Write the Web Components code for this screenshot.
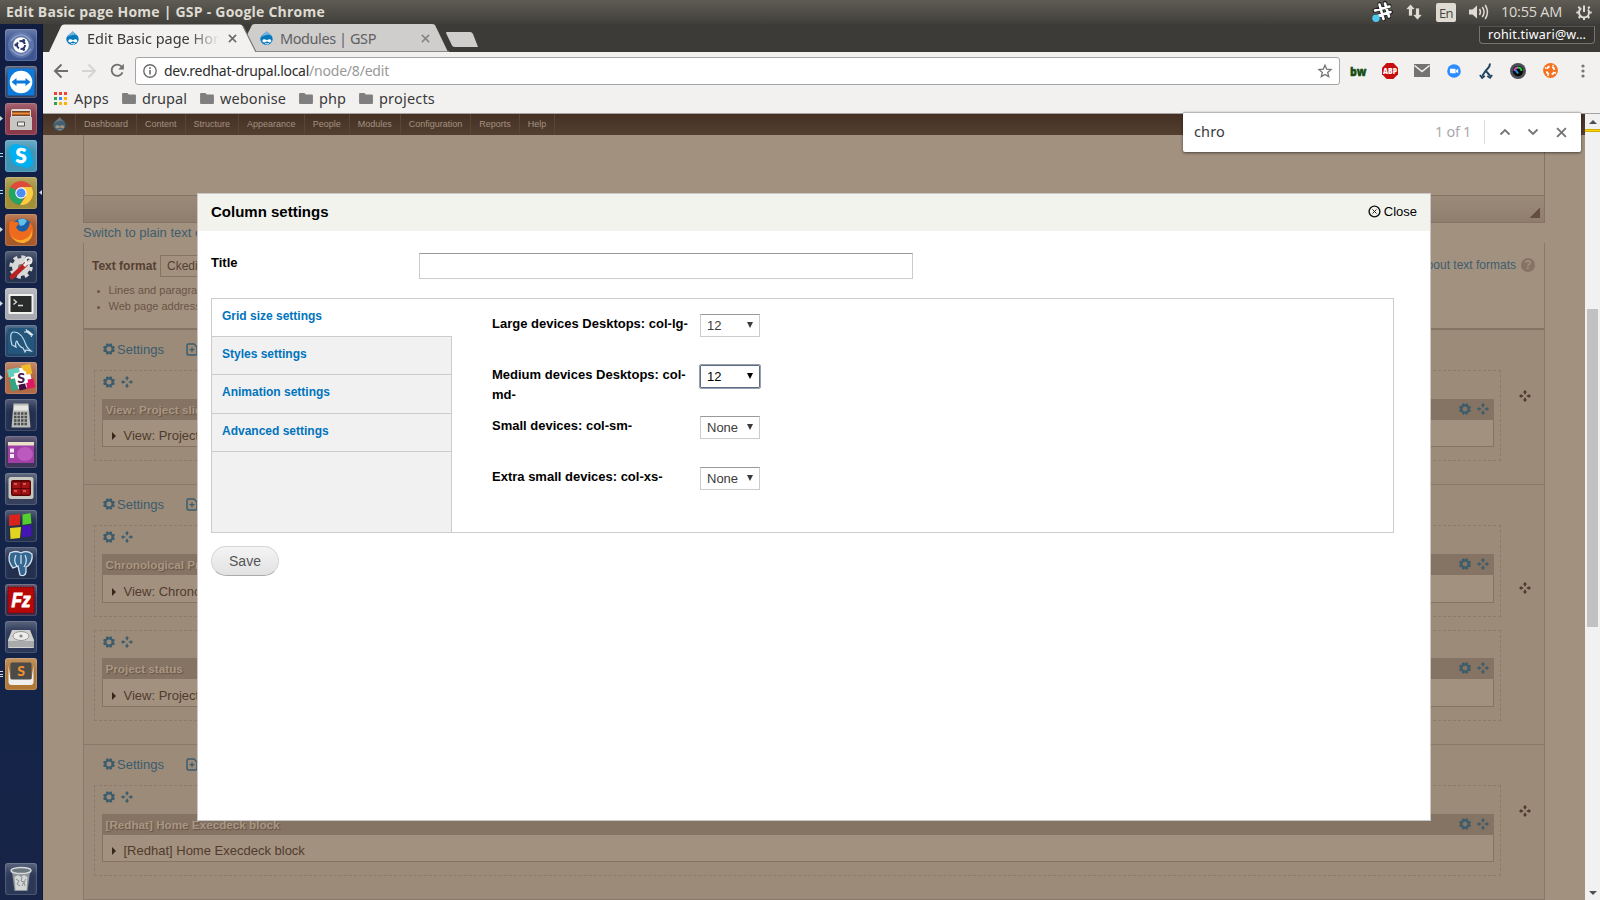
<!DOCTYPE html>
<html lang="en">
<head>
<meta charset="utf-8">
<title>Edit Basic page Home | GSP</title>
<style>
html,body{margin:0;padding:0;width:1600px;height:900px;overflow:hidden;background:#a39180;font-family:"Liberation Sans",Arial,sans-serif}
</style>
</head>
<body>
<desk-top></desk-top>
<script>
const define = (name, css, html, init) => {
  const t = document.createElement('template');
  t.innerHTML = '<style>*{box-sizing:border-box}' + css + '</style>' + html;
  customElements.define(name, class extends HTMLElement {
    connectedCallback() {
      if (this.shadowRoot) return;
      this.attachShadow({mode: 'open'}).append(t.content.cloneNode(true));
      if (init) init(this, this.shadowRoot);
    }
  });
};

/* Text whose tracking is adjusted to occupy a given width */
define('fit-text', ':host{display:block;flex:none;white-space:pre;line-height:20px}span{display:inline-block}', '<span><slot></slot></span>', (el, root) => {
  const w = +el.getAttribute('w'), s = root.querySelector('span');
  el.style.width = w + 'px';
  const n = el.textContent.length;
  const d = (w - s.getBoundingClientRect().width) / n;
  s.style.letterSpacing = d + 'px';
});

const ICONS = {
  gear: ['0 0 12 12', '<circle cx="6" cy="6" r="3.6" fill="none" stroke="currentColor" stroke-width="2.2"/><g stroke="currentColor" stroke-width="2.4"><path d="M3.9.6l.6 1.6M8.1.6l-.6 1.6M3.9 11.4l.6-1.6M8.1 11.4l-.6-1.6M.5 3.9l1.800.7M.5 8.1l1.8-.7M11.5 3.9l-1.800.7M11.5 8.1l-1.8-.7"/></g>'],
  move: ['0 0 12 12', '<g fill="currentColor"><path d="M6 0l2.200 2.400H3.800zM6 12l2.200-2.400H3.800zM0 6l2.400-2.200v4.400zM12 6L9.600 3.800v4.400z"/><path d="M5.200 2h1.600v2.200H5.200zM5.200 7.800h1.600V10H5.200zM2 5.200h2.200v1.600H2zM7.800 5.200H10v1.600H7.800z"/></g>'],
  add: ['0 0 12 13', '<path d="M1 2.500Q1 1 2.500 1H8l3 3v6.500Q11 12 9.500 12h-7Q1 12 1 10.500z" fill="none" stroke="currentColor" stroke-width="1.500"/><path d="M6 4.200v5M3.500 6.700h5" stroke="currentColor" stroke-width="1.300"/>'],
  drop: ['0 0 16 16', '<path d="M8.200.500C9 2.700 14.600 4.300 14.600 9.300a6.600 6.200 0 0 1-13.200 0C1.400 5 6 3.500 8.200.500z" fill="var(--drop,#0678be)"/><path d="M8.200.500C9 2.700 11.500 3.500 13.300 5.600 9.800 3.300 5.500 5.300 2.300 7.200 3 4.600 6.400 3.300 8.200.500z" fill="var(--eye,#fff)" opacity=".45"/><path d="M3.600 11.200c0-2.600 3.200-2.400 4.900-.8 1.700-1.700 4.600-1.500 4.600.9 0 2.200-2.800 1.500-4.400.2-2 1.500-5.100 1.800-5.100-.3z" fill="var(--eye,#fff)"/><path d="M6.500 13.700c1.300.8 2.700.8 4 0" stroke="var(--eye,#fff)" fill="none"/>'],
  x: ['0 0 10 10', '<path d="M1 1l8 8M9 1L1 9" stroke="currentColor" stroke-width="1.700"/>'],
  back: ['0 0 16 16', '<path d="M15 8H2M8.500 1.500L2 8l6.500 6.500" fill="none" stroke="currentColor" stroke-width="2"/>'],
  reload: ['0 0 16 16', '<path d="M13.300 10A6 6 0 1 1 12.500 4" fill="none" stroke="currentColor" stroke-width="2"/><path d="M14.800.800v6H8.800z" fill="currentColor"/>'],
  info: ['0 0 14 14', '<circle cx="7" cy="7" r="6.200" fill="none" stroke="#6b6b6b" stroke-width="1.400"/><path d="M7 6v4.500M7 3.300v1.600" stroke="#6b6b6b" stroke-width="1.600"/>'],
  star: ['0 0 14 14', '<path d="M7 1.200l1.700 4 4.300.4-3.300 2.800 1 4.200L7 10.400l-3.700 2.200 1-4.200L1 5.600l4.300-.4z" fill="none" stroke="#757575" stroke-width="1.300"/>'],
  folder: ['0 0 15 13', '<path d="M1 1h4.800l1.500 1.700H14q1 0 1 1V12q0 1-1 1H1q-1 0-1-1V2q0-1 1-1z" fill="#7f7f7f"/>'],
  grid: ['0 0 13 13', '<path d="M0 0h3v3H0zM5 0h3v3H5zM10 0h3v3h-3z" fill="#ef4135"/><path d="M0 5h3v3H0zM0 10h3v3H0z" fill="#2ea44f"/><path d="M5 5h3v3H5z" fill="#4285f4"/><path d="M10 5h3v3h-3zM5 10h3v3H5zM10 10h3v3h-3z" fill="#fbb10a"/>'],
  mail: ['0 0 16 13', '<path d="M0 0h16v13H0z" fill="#737373"/><path d="M.500 1.500L8 7.500l7.500-6" fill="none" stroke="#f2f1f0" stroke-width="1.600"/>'],
  zoomcam: ['0 0 14 14', '<circle cx="7" cy="7" r="6.800" fill="#2d8cff"/><path d="M3 4.700h4.800q.800 0 .800.800v3.800H3.800Q3 9.300 3 8.500zM9.100 6.300L11.200 4.700v4.600L9.100 7.900z" fill="#fff"/>'],
  branch: ['0 0 14 16', '<path d="M11 .5C11 5 8 5.500 6.500 8 5.500 10 3.800 11 3.300 13.500M6.800 7.500c1 2.500 3.900 3.500 4.200 6" fill="none" stroke="#1f4560" stroke-width="2"/><path d="M.8 12l2.300 3 2.800-2.200M8.300 13l2.800 2 2.100-3" fill="none" stroke="#1f4560" stroke-width="1.600"/>'],
  lens: ['0 0 16 16', '<circle cx="8" cy="8" r="8" fill="#4b4d58"/><circle cx="8" cy="8" r="5.200" fill="#090909"/><path d="M4.500 8A3.500 3.500 0 0 1 8 4.500" stroke="#e04ac0" stroke-width="2" fill="none"/><path d="M7.500 4.500A3.500 3.500 0 0 1 11.500 8" stroke="#27cf45" stroke-width="2" fill="none"/><path d="M5.500 7l2.500 3.500" stroke="#1992e8" stroke-width="2"/>'],
  orange: ['0 0 15 15', '<circle cx="7.500" cy="7.500" r="7.400" fill="#f6711f"/><circle cx="7.500" cy="7.500" r="4" fill="none" stroke="#fff" stroke-width="2" stroke-dasharray="3.500 2.783" stroke-dashoffset="-1.400"/><path d="M3.200 5.500l-1.200-1M9.500 3.200l1-1.200M11.800 9.500l1.200 1M5.500 11.800l-1 1.200" stroke="#fff" stroke-width="1.300"/>'],
  dots: ['0 0 4 14', '<circle cx="2" cy="2" r="1.600" fill="#757575"/><circle cx="2" cy="7" r="1.600" fill="#757575"/><circle cx="2" cy="12" r="1.600" fill="#757575"/>'],
  up: ['0 0 12 8', '<path d="M1.500 6.500L6 2l4.500 4.500" fill="none" stroke="currentColor" stroke-width="1.800"/>'],
  down: ['0 0 12 8', '<path d="M1.500 1.500L6 6l4.500-4.500" fill="none" stroke="currentColor" stroke-width="1.800"/>'],
  abp: ['0 0 16 16', '<path d="M4.700 0h6.600L16 4.700v6.600L11.300 16H4.700L0 11.300V4.700z" fill="#c70d0d"/><text x="8" y="10.900" text-anchor="middle" textLength="14" lengthAdjust="spacingAndGlyphs" font-family="Open Sans" font-weight="800" font-size="8" fill="#fff">ABP</text>'],
  bw: ['0 0 17 12', '<text x="0" y="10.500" font-family="Open Sans,sans-serif" font-weight="800" font-size="11.500" textLength="16.500" lengthAdjust="spacingAndGlyphs" fill="#164d13" stroke="#164d13" stroke-width=".4">bw</text>'],
  closeo: ['0 0 13 13', '<circle cx="6.500" cy="6.500" r="5.400" fill="none" stroke="#111" stroke-width="1.400"/><path d="M4.500 4.500l4 4M8.500 4.500l-4 4" stroke="#222" stroke-width="1"/>'],
  slack: ['0 0 20 20', '<path d="M7.500 2l4.500 15M13 .800l4 14M2.500 8.500L17.500 4M3.500 14.500L19 10" stroke="#222" stroke-width="4.200" stroke-linecap="round"/><path d="M7.500 2.500l4 14.500M13 1.500l4 13M3 8.500L17.500 4.500M4 14.500L18.500 10" stroke="#fff" stroke-width="2.600" stroke-linecap="round"/><circle cx="4" cy="16.200" r="3.700" fill="#4cc9f0"/>'],
  net: ['0 0 18 16', '<path d="M5.500 0l5 5.500h-3V12h-4V5.500H.500zM12.500 16l5-5.500h-3V4h-4v6.500h-3z" fill="#dfdbd2" stroke="#45443f" stroke-width=".7"/>'],
  vol: ['0 0 20 16', '<path d="M0 5.500h3.500L8 1.500v13L3.500 10.500H0z" fill="#dfdbd2"/><path d="M10.500 5q2 3 0 6M13.300 3q3.500 5 0 10M16.200 1q4.500 7 0 14" fill="none" stroke="#dfdbd2" stroke-width="1.500"/>'],
  power: ['0 0 16 16', '<circle cx="8" cy="8.500" r="5" fill="none" stroke="#dfdbd2" stroke-width="1.900" stroke-dasharray="24 7.400" stroke-dashoffset="-27.500"/><path d="M8 1.500v6.500" stroke="#dfdbd2" stroke-width="2"/><path d="M4 4.500L2.300 2.800M12 4.500l1.700-1.700M3 8.500H.3M13 8.500h2.700M4.500 12l-1.800 2M11.500 12l1.800 2M8 13.500V16" stroke="#dfdbd2" stroke-width="2"/>'],
  help: ['0 0 14 14', '<circle cx="7" cy="7" r="7" fill="#857363"/><text x="7" y="11.300" text-anchor="middle" font-family="Liberation Sans" font-weight="700" font-size="12" fill="#a39180">?</text>']
};
define('ui-icon', ':host{display:block;flex:none}svg{display:block;width:100%;height:100%;overflow:visible}', '<svg></svg>', (el, root) => {
  const [vb, body] = ICONS[el.getAttribute('name')], s = root.querySelector('svg');
  s.setAttribute('viewBox', vb); s.innerHTML = body;
  el.style.width = el.getAttribute('w') + 'px';
  el.style.height = (el.getAttribute('h') || el.getAttribute('w')) + 'px';
});

/* Top panel */
define('top-panel', `:host{display:flex;height:24px;background:linear-gradient(#5e5c53,#413f3b);color:#dfdbd2;align-items:center;padding:0 8px 0 6px;font-family:"Open Sans","Noto Sans",sans-serif}
 .t{font-weight:700;font-size:14px}.s{flex:1}
 .en{width:20px;height:19px;background:#dfdbd2;color:#45443f;border-radius:2px;font-size:13px;margin:0 13px 0 13px;line-height:20px;padding-left:3px}
 .c{font-size:14.500px;margin:0 14px 0 12px}`,
 `<fit-text class="t" w="319">Edit Basic page Home | GSP - Google Chrome</fit-text><span class="s"></span>
 <ui-icon name="slack" w="20"></ui-icon><ui-icon style="margin-left:13px" name="net" w="18" h="16"></ui-icon>
 <div class="en"><fit-text w="14">En</fit-text></div><ui-icon name="vol" w="20" h="16"></ui-icon>
 <fit-text class="c" w="61">10:55 AM</fit-text><ui-icon name="power" w="16"></ui-icon>`);

/* Launcher */
const TILES = [
 ['#3d5591', '<circle cx="16" cy="16" r="13" fill="#7187b8" opacity=".6"/><path d="M6 12Q16 0 26 12M26 20Q16 32 6 20" stroke="#a9b9dc" stroke-width="1.500" fill="none" opacity=".6"/><circle cx="16" cy="16" r="7.800" fill="#fff"/><circle cx="16" cy="16" r="4" fill="none" stroke="#27396b" stroke-width="2" stroke-dasharray="6.600 1.780"/><circle cx="10.800" cy="16" r="1.400" fill="#27396b"/><circle cx="18.700" cy="11.500" r="1.400" fill="#27396b"/><circle cx="18.700" cy="20.500" r="1.400" fill="#27396b"/>'],
 ['#33415f', '<rect x="2.500" y="2.500" width="27" height="27" rx="1" fill="#0d79db"/><circle cx="16" cy="16" r="11.300" fill="#fff"/><path d="M6.500 16l5-4v2.500h9V12l5 4-5 4v-2.500h-9V20z" fill="#0d79db"/>'],
 ['#8b3a49', '<path d="M6 8q0-2 2-2h16q2 0 2 2v18H6z" fill="#dcdad6"/><path d="M7 8h18v5H7z" fill="#754224"/><path d="M7 9.500h18v2H7z" fill="#f08a34"/><path d="M5 14h22v13H5z" fill="#c9c7c3"/><path d="M12.500 19h7v4h-7z" fill="#eee" stroke="#555"/>'],
 ['#3f93b4', '<circle cx="11" cy="11" r="7" fill="#00aff0"/><circle cx="21" cy="21" r="7" fill="#00aff0"/><circle cx="16" cy="16" r="10.500" fill="#00aff0"/><text x="16" y="23" text-anchor="middle" font-family="Lato" font-weight="900" font-size="20" fill="#fff" stroke="#fff" stroke-width=".6">S</text>'],
 ['#a29038', '<circle cx="16" cy="16" r="12" fill="#de4b3c"/><path d="M16 16L5.600 10A12 12 0 0 0 15 28l5-9z" fill="#21a565"/><path d="M16 10h10.400A12 12 0 0 1 15 28l6-9z" fill="#fcce41"/><circle cx="16" cy="16" r="5.700" fill="#fff"/><circle cx="16" cy="16" r="4.600" fill="#4f8df5"/>'],
 ['#a95a2b', '<circle cx="17" cy="15" r="10.500" fill="#1c5fa6"/><path d="M13 6q6-3 9 1l-3 4-4 1z" fill="#62bfe7"/><path d="M4.500 8Q7 6 9 8q4-1 5 2l-3 3q3 6 9 4 4-2 5-9 5 6 2 13-4 8-12 7Q4 26 4 15z" fill="#ee6a1d"/><path d="M5 20q7 10 17 4 4-3 5-8 2 10-8 13-9 1-14-9z" fill="#fdac2c"/>'],
 ['#263450', '<circle cx="16" cy="16" r="9" fill="#d8d8d6"/><circle cx="16" cy="16" r="10" fill="none" stroke="#d8d8d6" stroke-width="3.500" stroke-dasharray="4 3.850"/><circle cx="16" cy="16" r="3" fill="#77797d"/><path d="M7 26L21 13" stroke="#b92222" stroke-width="4.500" stroke-linecap="round"/><path d="M19 15l3-3" stroke="#eee" stroke-width="3"/><circle cx="23.500" cy="9.500" r="3" fill="none" stroke="#eee" stroke-width="2"/>'],
 ['#a9aab0', '<rect x="3.500" y="6" width="25" height="20" rx="1" fill="#f1f1ee"/><rect x="5.500" y="8" width="21" height="16" fill="#292b2b"/><path d="M8.500 11.500l3 2.500-3 2.500M13 17.500h5" stroke="#ddd" stroke-width="1.300" fill="none"/>'],
 ['#24466a', '<rect x="3" y="3" width="26" height="26" rx="2" fill="#24567c"/><path d="M7 20C5 13 5 7 9 7c6 0 10 7 12 13 1 3 3 4 5 6l-5-1-1 2-2-4c-4-1-5-4-6-7-1 0-2 3-1 6-2-1-3-2-4-2z" fill="none" stroke="#c1dced" stroke-width="1.200"/><path d="M22 6l5 4" stroke="#dce7ee" stroke-width="2.400"/><path d="M21 4l1 3-3 0M28 9l-2 3" stroke="#dce7ee" fill="none"/>'],
 ['#b06a45', '<g transform="rotate(-12 16 16)"><rect x="6" y="6" width="20" height="20" fill="#fff"/><path d="M4 5h12v8H4z" fill="#66cbb8"/><path d="M18 4h10v10h-6z" fill="#f0b92c"/><path d="M4 15l7 0v12H4z" fill="#36a383"/><path d="M12 22h7v6h-7z" fill="#421245"/><path d="M20 19h8v9h-8z" fill="#e01765"/></g><rect x="10" y="10" width="12" height="12" fill="#fff" transform="rotate(-12 16 16)"/><text x="16" y="21" text-anchor="middle" font-family="Lato" font-weight="900" font-size="14" fill="#481449">S</text>'],
 ['#222f4f', '<path d="M8.500 4.500h15l2 24h-19z" fill="#b9bab6"/><rect x="9" y="6.500" width="14" height="5" fill="#e4e6df"/><path d="M9 14.500h14M9 18h14M9 21.500h14M9 25h14" stroke="#4c4f50" stroke-width="2.300" stroke-dasharray="2.500 1"/>'],
 ['#3c3558', '<rect x="3" y="6" width="26" height="21" fill="#a03fa5"/><ellipse cx="20" cy="18" rx="8" ry="7" fill="#cf6bce" opacity=".6"/><path d="M3 6h26v3.500H3z" fill="#e9e3c9"/><path d="M5 12.500h4v4H5zM5 18h4v4H5z" fill="#f3e9f4"/>'],
 ['#35405c', '<rect x="3.500" y="4" width="25" height="22" rx="2.500" fill="#c8c7c1"/><rect x="6" y="7" width="20" height="16" rx="2" fill="#5c0505"/><path d="M7.500 9h8v6h-8zM16.500 9h8v6h-8zM7.500 16h8v5.500h-8zM16.500 16h8v5.500h-8z" fill="#a31313"/><path d="M9 11h3M18 11h3M9 18h3M18 18h3" stroke="#f0a0a0"/>'],
 ['#222f4f', '<path d="M4 5l11-1v11L4 16z" fill="#d9241b"/><path d="M17.500 4.500l8-1.500 1 10.500-9 1.500z" fill="#54cf2e"/><path d="M5 18l11-1-1 11-9.500 1z" fill="#e3d51f"/><path d="M17 16l9.500-1v11L17 27.500z" fill="#4415b5"/>'],
 ['#222f4f', '<path d="M5 6q6-3 11 0 6-3 11 1 1 7-4 12l-2 1v5q-1 5-6 3l-2-9-5 2Q2 14 5 6z" fill="#336791" stroke="#d7e4ee" stroke-width="1.300"/><path d="M11 8q-3 6 1 11M20 8q3 6-1 12M16 8v9" fill="none" stroke="#d7e4ee" stroke-width="1.200"/>'],
 ['#392b49', '<rect x="3" y="3" width="26" height="26" fill="#b80707"/><rect x="3" y="3" width="26" height="26" fill="none" stroke="#5a0b18" stroke-dasharray="1.500 1.500"/><text x="16" y="23" text-anchor="middle" textLength="19" lengthAdjust="spacingAndGlyphs" font-family="Liberation Sans" font-style="italic" font-weight="700" font-size="20" fill="#fff" stroke="#fff" stroke-width=".9">Fz</text>'],
 ['#2b3858', '<path d="M7 9h18l4 10v7q0 1-1 1H4q-1 0-1-1v-7z" fill="#d1d1d0"/><path d="M3 20h26v6H3z" fill="#a8aaab"/><ellipse cx="16" cy="15" rx="8" ry="4.500" fill="#ececeb" stroke="#999"/><circle cx="16" cy="15" r="1.600" fill="#888"/>'],
 ['#b07735', '<path d="M3.500 7v17q0 3 3 3h19q3 0 3-3V7l-2 14h-21z" fill="#efefef"/><rect x="5.500" y="4.500" width="21" height="17" rx="1.500" fill="#4b4b49"/><text x="16" y="17.500" text-anchor="middle" font-family="Lato" font-weight="900" font-size="14" fill="#f3922b">S</text>'],
 ['#2b3858', '<path d="M7 9h18l-2.500 19h-13z" fill="#8d9397"/><path d="M9.500 14l3.500-2 3 2 3-2 3.500 2-1 13h-11z" fill="#d4d6d6"/><path d="M11 16l3 2-2 3 3 2M17 14l-1 4 3 1-2 4M21 16l-2 3 1 4" stroke="#8a8e90" fill="none"/><ellipse cx="16" cy="7.500" rx="10" ry="3" fill="#6e7880" stroke="#d5d8d8" stroke-width="1.500"/>']
];
define('launch-tile', `:host{display:block;width:32px;height:32px;border-radius:3px;flex:none;box-shadow:inset 0 0 0 1px rgba(255,255,255,.14),inset 0 9px 8px -4px rgba(255,255,255,.25)}
 svg{display:block}`, '<svg width="32" height="32" viewBox="0 0 32 32"></svg>', (el, root) => {
  const [c, b] = TILES[+el.getAttribute('n')];
  el.style.backgroundColor = c;
  root.querySelector('svg').innerHTML = b;
});
define('app-launcher', `:host{display:block;background:linear-gradient(#101c40,#152348 30%,#142449 80%,#182447);border-right:1px solid #0d1733;height:876px;overflow:hidden}
 .col{display:flex;flex-direction:column;padding:5px 0 5px 5px;gap:5px;height:100%}
 .row{display:flex;position:relative}.last{margin-top:auto}
 .p{position:absolute;left:-5px;top:13px;width:3px;height:5px;background:#d5d8df;clip-path:polygon(0 0,100% 50%,0 100%)}
 .two{height:4px;clip-path:none;background:linear-gradient(#9edcf0 1px,transparent 1px 3px,#9edcf0 3px)}
 .three{height:6px;clip-path:none;background:repeating-linear-gradient(#d5d8df 0 1px,transparent 1px 2.500px)}
 .r{position:absolute;left:34px;top:13px;width:3px;height:5px;background:#d5d8df;clip-path:polygon(100% 0,0 50%,100% 100%)}`,
 '<div class="col"></div>', (el, root) => {
  const mark = i => [2,5,7,9].includes(i) ? '<i class="p"></i>' : [3,4].includes(i) ? '<i class="p two"></i>' : i === 17 ? '<i class="p three"></i>' : '';
  root.querySelector('.col').innerHTML = TILES.map((_, i) => `<div class="row${i === 18 ? ' last' : ''}">${mark(i)}${i === 4 ? '<i class="r"></i>' : ''}<launch-tile n="${i}"></launch-tile></div>`).join('');
});

/* Browser chrome */
define('tab-strip', `:host{display:block;position:relative;height:28px;background:#3c3b37;font-family:"Noto Sans","Open Sans",sans-serif;font-size:14.500px}
 .bg{position:absolute;left:0;top:0}
 .tabs{position:relative;display:flex;align-items:center;height:28px;padding-left:22px}
 .a{color:#3a3a3a;-webkit-mask-image:linear-gradient(90deg,#000 78%,transparent)}
 .b{color:#616161}
 .user{position:absolute;right:5px;top:2px;width:116px;height:18px;border:1px solid #77756e;border-top-color:#56544f;border-radius:0 0 4px 4px;color:#fff;font-size:12.500px;padding-left:8px;line-height:16px;background:#353431}
 .user fit-text{line-height:16px}`,
 `<svg class="bg" width="460" height="28"><path d="M204 28l-3-11 8-16q1-1 3-1h177q2 0 3 1l13 27z" fill="#cfcecd"/><path d="M204 27.500h202" stroke="#888"/><path d="M6 28L18 2.500q1-2 3-2h176q2 0 3 2l13 25.500z" fill="#f2f1f0"/><path d="M200 2l13 26" stroke="#777" stroke-width="1.200"/><path d="M404 8h23q2 0 3 2l5 13h-23q-2 0-3-1.500L403 9q0-1 1-1z" fill="#cfcecd"/></svg>
 <div class="tabs"><ui-icon name="drop" w="15" h="16"></ui-icon><fit-text style="margin-left:7px" class="a" w="132">Edit Basic page Hor</fit-text><ui-icon style="margin-left:9px;color:#6a6a6a" name="x" w="9"></ui-icon>
 <ui-icon style="margin-left:22px" name="drop" w="15" h="16"></ui-icon><fit-text style="margin-left:6px" class="b" w="96">Modules | GSP</fit-text><ui-icon style="margin-left:45px;color:#858585" name="x" w="9"></ui-icon></div>
 <div class="user"><fit-text w="98">rohit.tiwari@w…</fit-text></div>`);
define('tool-bar', `:host{display:block;height:62px;background:#f2f1f0;border-bottom:1px solid #a6a5a3;font-family:"Noto Sans","Open Sans",sans-serif}
 .r{display:flex;align-items:center;height:37px;padding:0 15px 0 10px;color:#6f6f6f}
 .o{display:flex;align-items:center;width:1205px;height:28px;border:1px solid #a5a5a5;border-radius:3px;background:#fff;margin-left:10px;padding:0 7px;font-size:14px;color:#2d2d2d;flex:none}
 .k{display:flex;align-items:center;height:18px;padding-left:11px;color:#3a3a3a;font-size:14.500px}
 .g{color:#999}`,
 `<div class="r"><ui-icon name="back" w="16"></ui-icon><ui-icon name="back" w="16" style="transform:scaleX(-1);color:#d5d4d3;margin-left:12px"></ui-icon><ui-icon name="reload" w="15" style="margin-left:13px"></ui-icon>
 <div class="o"><ui-icon name="info" w="14"></ui-icon><fit-text style="margin-left:7px" w="145">dev.redhat-drupal.local</fit-text><fit-text class="g" w="80">/node/8/edit</fit-text><ui-icon style="margin-left:auto" name="star" w="14"></ui-icon></div>
 <ui-icon name="bw" w="17" h="12" style="margin-left:10px"></ui-icon><ui-icon name="abp" w="16" style="margin-left:15px"></ui-icon><ui-icon name="mail" w="16" h="13" style="margin-left:16px"></ui-icon><ui-icon name="zoomcam" w="14" style="margin-left:17px"></ui-icon><ui-icon name="branch" w="14" h="16" style="margin-left:18px"></ui-icon><ui-icon name="lens" w="16" style="margin-left:17px"></ui-icon><ui-icon name="orange" w="15" style="margin-left:17px"></ui-icon><ui-icon name="dots" w="4" h="14" style="margin-left:auto"></ui-icon></div>
 <div class="k"><ui-icon name="grid" w="13"></ui-icon><fit-text w="35" style="margin-left:7px">Apps</fit-text>
 <ui-icon name="folder" w="14" h="12" style="margin-left:13px"></ui-icon><fit-text w="45" style="margin-left:6px">drupal</fit-text>
 <ui-icon name="folder" w="14" h="12" style="margin-left:13px"></ui-icon><fit-text w="66" style="margin-left:6px">webonise</fit-text>
 <ui-icon name="folder" w="14" h="12" style="margin-left:13px"></ui-icon><fit-text w="27" style="margin-left:6px">php</fit-text>
 <ui-icon name="folder" w="14" h="12" style="margin-left:13px"></ui-icon><fit-text w="56" style="margin-left:6px">projects</fit-text></div>`);
define('find-bar', `:host{position:absolute;left:1183px;top:112px;width:398px;height:40px;background:#fff;border-radius:2px;box-shadow:0 1px 3px rgba(0,0,0,.55);display:flex;align-items:center;padding:0 14px 1px 11px;font-family:"Noto Sans","Open Sans",sans-serif;font-size:14.500px;color:#3a3a3a;border-top:1px solid #b9b8b6}
 fit-text{margin-top:-3px}
 .n{color:#a9a9a9;margin-left:auto}i{width:1px;height:24px;background:#d9d9d9;margin:0 14px 0 13px}ui-icon{color:#757575}`,
 `<fit-text w="31">chro</fit-text><fit-text class="n" w="36">1 of 1</fit-text><i></i><ui-icon name="up" w="12" h="8"></ui-icon><ui-icon style="margin-left:16px" name="down" w="12" h="8"></ui-icon><ui-icon style="margin-left:17px" name="x" w="11"></ui-icon>`);

/* Drupal page */
define('admin-menu', `:host{display:flex;height:21px;background:linear-gradient(#443124,#543f30);font-size:9px;line-height:20px;color:#a39180;padding-left:9px;--drop:#426274;--eye:#a39180}
 ui-icon{margin:2px 8px 0 0}span{border-left:1px solid #5a4536;padding:0 8px;flex:none}span:last-child{border-right:1px solid #5a4536}`,
 '<ui-icon name="drop" w="15" h="16"></ui-icon>' + 'Dashboard,Content,Structure,Appearance,People,Modules,Configuration,Reports,Help'.split(',').map(t => `<span>${t}</span>`).join(''));
define('text-editor', `:host{display:block}
 .e{height:88px;border:1px solid #857363;border-top:0;display:flex;flex-direction:column}
 .b{margin-top:auto;height:27px;border-top:1px solid #857363;background:linear-gradient(#9c8a79,#8f7d6d);position:relative}
 .b i{position:absolute;right:4px;bottom:4px;width:10px;height:10px;background:linear-gradient(135deg,transparent 50%,#644f3f 50%)}
 a{display:block;height:20px;line-height:19px;font-size:13px;color:#3d5e6e}
 .f{height:86px;border:1px solid #8a7868;border-top:0;border-bottom:0;padding:12px 9px 0 8px;display:grid;grid-template-rows:21px 1fr;font-size:12px;color:#554031}
 .l{display:flex;align-items:center}.l b{width:68px;line-height:22px;white-space:nowrap}
 .s{border:1px solid #857363;height:22px;padding:0 6px;line-height:20px;width:140px}
 .l ui-icon{margin-top:-1px}
 .h{margin-left:auto;color:#3d5e6e;margin:-2px 5px 0 auto}
 ul{margin:6px 0 0;padding:0 0 0 16.500px;font-size:11px;line-height:16px;color:#6a5444}li::marker{font-size:9px}`,
 `<div class="e"><div class="b"><i></i></div></div><a>Switch to plain text editor</a>
 <div class="f"><div class="l"><b>Text format</b><div class="s">Ckeditor</div><span class="h">About text formats</span><ui-icon name="help" w="14"></ui-icon></div>
 <ul><li>Lines and paragraphs break automatically.</li><li>Web page addresses turn into links automatically.</li></ul></div>`);
define('layout-block', `:host{display:block;margin:0 6px 0 7px;border:1px solid #857363;height:var(--h,48px);background:#a39180}
 .h{height:20px;background:#857363;display:flex;align-items:center;padding:0 4px 0 2.500px;color:#a99785;font-weight:700;font-size:11.700px;line-height:20px;text-shadow:1px 1px 1px #654}
 .h ui-icon{color:#3a5c6c;margin-top:-2px}.r{display:flex;align-items:center;font-size:13px;line-height:16px;color:#503b2c;padding:var(--rp,8px) 0 0 9px}
 i{border:solid transparent;border-width:4px 0 4px 4px;border-left-color:#382619;margin-right:7.500px}`,
 `<div class="h"><slot name="title"></slot><ui-icon style="margin-left:auto" name="gear" w="12"></ui-icon><ui-icon style="margin-left:6px" name="move" w="12"></ui-icon></div><div class="r"><i></i><slot></slot></div>`);
define('layout-column', `:host{display:block;border:1px dashed #8c7a6a;height:var(--rh,91px)}
 .t{display:flex;align-items:center;gap:6px;height:var(--th,28px);padding:0 0 6px 7.500px;color:#3a5c6c}`,
 `<div class="t"><ui-icon name="gear" w="12"></ui-icon><ui-icon name="move" w="12"></ui-icon></div><slot></slot>`);
define('layout-row', `:host{display:grid;grid-template-columns:1407px 1fr;border:1px solid #8a7868;border-top:0;height:var(--sh,155px);background:#9d8b7a;padding-left:10px}
 .t{height:40px;display:flex;align-items:center;color:#3a5c6c;font-size:13px;padding:0 0 2px 8.500px}.t span{margin:0 21px 0 2.500px;width:48px}
 .c{display:flex;flex-direction:column;gap:13px}
 .m{display:flex;justify-content:center;padding:var(--mt,60px) 0 0 4px;color:#4b3728}`,
 `<div><div class="t"><ui-icon name="gear" w="12"></ui-icon><span>Settings</span><ui-icon name="add" w="12" h="13"></ui-icon></div><div class="c"><slot></slot></div></div><div class="m"><ui-icon name="move" w="12"></ui-icon></div>`);
define('page-view', `:host{display:grid;grid-template-rows:21px 1fr;height:786px;background:#a39180;overflow:hidden}
 .p{padding:0 40px}.g{border-top:2px solid #857363}`,
 `<admin-menu></admin-menu><div class="p"><text-editor></text-editor><div style="height:1px"></div><div style="margin-top:-2px" class="g">
 <layout-row style="--mt:60px"><layout-column><layout-block><span slot="title">View: Project slider</span>View: Project slider</layout-block></layout-column></layout-row>
 <layout-row style="--sh:260px;--mt:97px"><layout-column style="--rh:92px"><layout-block style="--h:49px;--rp:9px"><span slot="title">Chronological Projects</span>View: Chronological Projects</layout-block></layout-column>
 <layout-column style="--th:27px"><layout-block style="--h:49px;--rp:9px"><span slot="title">Project status</span>View: Project status</layout-block></layout-column></layout-row>
 <layout-row style="--mt:60px"><layout-column><layout-block><span slot="title">[Redhat] Home Execdeck block</span>[Redhat] Home Execdeck block</layout-block></layout-column></layout-row></div></div>`);
define('scroll-bar', `:host{display:grid;grid-template-rows:15px 3px 177px 318px 1fr 15px;background:#f1f1f1;height:786px;justify-items:center}
 i{width:0;height:0;border:4px solid transparent;align-self:center}.u{border-bottom-color:#505050;margin-top:-4px}.d{border-top-color:#505050;margin-top:4px}
 .y{width:15px;border:solid #cdab00;border-width:1px 0;background:#ffd700}.t{background:#c1c1c1;width:11px}`,
 '<i class="u"></i><b class="y"></b><b></b><b class="t"></b><b></b><i class="d"></i>');

/* Modal dialog */
define('select-box', `:host{display:flex;width:60px;height:23px;border:1px solid #ccc;border-top-color:#999;font-size:13px;line-height:21px;color:#3b3b3b;padding:0 6px;background:#fff;align-items:center;justify-content:space-between}
 :host([focus]){outline:1px solid #9aa0a8;border-color:#5b6c88;border-radius:1px;color:#000}
 i{border:solid transparent;border-width:6px 3px 0;border-top-color:currentColor;margin-top:-1px}`, '<slot></slot><i></i>');
define('size-field', ':host{display:grid;grid-template-columns:208px 60px;height:51px;align-items:start}b{font-size:13px;line-height:20px;width:200px}', '<b><slot></slot></b><select-box></select-box>', (el, root) => {
  const s = root.querySelector('select-box'); s.textContent = el.getAttribute('value');
  if (el.hasAttribute('focus')) s.setAttribute('focus', '');
});
define('settings-tabs', `:host{display:grid;grid-template-columns:240px 1fr;border:1px solid #ccc;height:235px}
 .t{background:#f1f1f1;border-right:1px solid #ccc;font-weight:700;font-size:12px;color:#0074bd;display:grid;grid-template-rows:38px 38px 39px 38px 1fr}
 .t span{border-bottom:1px solid #ccc;padding-left:10px;line-height:35px}.t .on{background:#fff;width:240px}
 .f{padding:15px 0 0 40px}`,
 `<div class="t"><span class="on">Grid size settings</span><span>Styles settings</span><span>Animation settings</span><span>Advanced settings</span></div>
 <div class="f"><size-field value="12">Large devices Desktops: col-lg-</size-field><size-field value="12" focus>Medium devices Desktops: col-md-</size-field><size-field value="None">Small devices: col-sm-</size-field><size-field value="None">Extra small devices: col-xs-</size-field></div>`);
define('modal-dialog', `:host{position:absolute;left:197px;top:193px;width:1234px;height:628px;background:#fff;border:1px solid #c8c8c8;display:block;color:#000}
 .h{height:37px;background:#f2f3ed;display:flex;align-items:center;padding:0 13px 2px 13px;font-weight:700;font-size:15px}
 .c{margin-left:auto;display:flex;align-items:center;gap:3px;font-weight:400;font-size:13px}
 .b{padding:22px 36px 0 13px}.t{display:flex;font-size:13px;font-weight:700;line-height:19px;height:45px}.t span{width:208px}
 .t i{width:494px;height:26px;border:1px solid #ccc;border-top-color:#999}
 .s{margin-top:13px;width:68px;height:30px;border:1px solid #d5d5d5;border-bottom-color:#aaa;border-radius:16px;background:linear-gradient(#f4f4f4,#e2e2e2);font-size:14px;color:#555;text-align:center;line-height:28px}`,
 `<div class="h">Column settings<div class="c"><ui-icon name="closeo" w="13"></ui-icon>Close</div></div>
 <div class="b"><div class="t"><span>Title</span><i></i></div><settings-tabs></settings-tabs><div class="s">Save</div></div>`);

define('desk-top', `:host{display:grid;grid-template:24px 876px/43px 1557px;width:1600px;height:900px;position:relative;overflow:hidden}
 top-panel{grid-column:1/3}.v{display:grid;grid-template-columns:1542px 15px}`,
 `<top-panel></top-panel><app-launcher></app-launcher><div><tab-strip></tab-strip><tool-bar></tool-bar><div class="v"><page-view></page-view><scroll-bar></scroll-bar></div></div><modal-dialog></modal-dialog><find-bar></find-bar>`);
</script>
</body>
</html>
